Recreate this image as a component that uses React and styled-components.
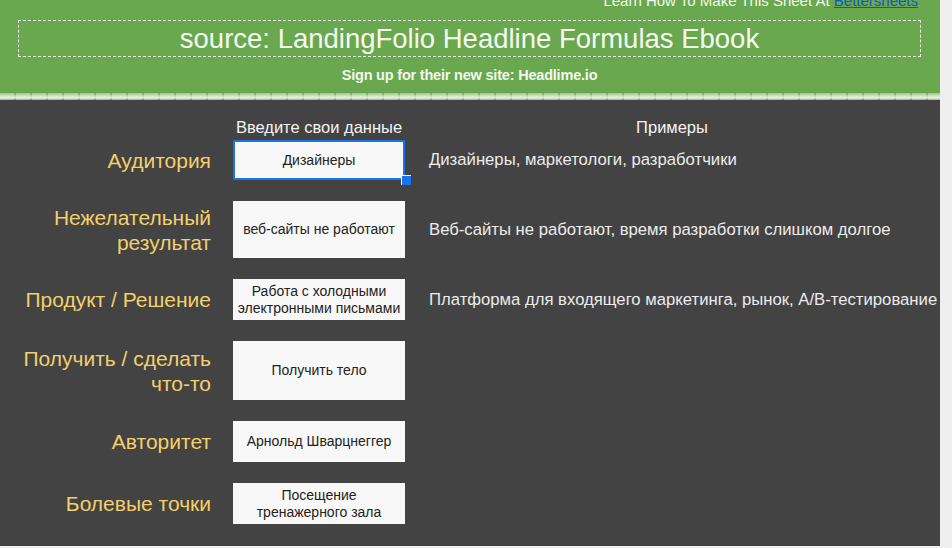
import React from 'react';
import styled, { createGlobalStyle } from 'styled-components';

const GlobalStyle = createGlobalStyle`
  html, body {
    margin: 0;
    padding: 0;
    background: #efefef;
    font-family: "Liberation Sans", Arial, sans-serif;
    overflow: hidden;
  }
`;

const Sheet = styled.div`
  width: 940px;
  height: 546px;
  background: #434343;
  display: flex;
  flex-direction: column;
  overflow: hidden;
`;

const Header = styled.div`
  background: #6aa84f;
  padding: 0 19px 0 18px;
  display: flex;
  flex-direction: column;
  height: 93px;
`;

const TopLink = styled.div`
  margin-top: -9px;
  height: 20px;
  text-align: right;
  padding-right: 3px;
  color: #f3f8ef;
  font-size: 15px;
  line-height: 20px;

  a {
    color: #1155cc;
  }
`;

const TitleBox = styled.div`
  margin-top: 9px;
  height: 35px;
  border: 1px dashed #e8f2e2;
  display: flex;
  align-items: center;
  justify-content: center;
  color: #f5faf1;
  font-size: 27.5px;
`;

const Sub = styled.div`
  margin-top: 10px;
  text-align: center;
  color: #f3f8ef;
  font-size: 14.5px;
  font-weight: bold;
  letter-spacing: -0.2px;
`;

const Edge = styled.div`
  height: 7px;
  background:
    repeating-linear-gradient(90deg, rgba(255, 255, 255, 0.35) 0 14px, rgba(255, 255, 255, 0) 14px 16px),
    linear-gradient(180deg, #6aa84f 0%, #b9d8a8 45%, #dfeed6 70%, #6f7a66 100%);
`;

const Table = styled.div`
  padding-top: 17px;
  display: flex;
  flex-direction: column;
`;

const Grid = styled.div`
  display: grid;
  grid-template-columns: 211px 172px 488px;
  column-gap: 22px;
  align-items: center;
  & > :nth-child(3n) {
    margin-left: 2px;
  }
`;

const Rows = styled(Grid)`
  row-gap: 21px;
  margin-top: 2px;
`;

const ColHead = styled.div`
  color: #f4f4f4;
  font-size: 16.5px;
  text-align: center;
  line-height: 21px;
  white-space: nowrap;
`;

const Label = styled.div`
  color: #f2d06b;
  font-size: 21px;
  line-height: 25px;
  text-align: right;
  white-space: nowrap;
`;

const Cell = styled.div`
  position: relative;
  box-sizing: border-box;
  height: ${p => p.$h}px;
  background: #f8f8f8;
  color: #222;
  font-size: 14px;
  line-height: 17px;
  display: flex;
  align-items: center;
  justify-content: center;
  text-align: center;
  padding: 0 4px;
  white-space: nowrap;
  border: ${p => (p.$active ? '2px solid #1a73e8' : 'none')};
`;

const Handle = styled.span`
  position: absolute;
  right: -8px;
  bottom: -7px;
  width: 9px;
  height: 9px;
  background: #1a73e8;
  border-left: 1px solid #fff;
  border-top: 1px solid #fff;
`;

const Example = styled.div`
  color: #ececec;
  font-size: 16.7px;
  white-space: nowrap;
`;

const rows = [
  { label: 'Аудитория', value: 'Дизайнеры', example: 'Дизайнеры, маркетологи, разработчики', h: 40, active: true },
  { label: ['Нежелательный', 'результат'], value: 'веб-сайты не работают', example: 'Веб-сайты не работают, время разработки слишком долгое', h: 57 },
  { label: 'Продукт / Решение', value: ['Работа с холодными', 'электронными письмами'], example: 'Платформа для входящего маркетинга, рынок, A/B-тестирование', h: 41 },
  { label: ['Получить / сделать', 'что-то'], value: 'Получить тело', example: '', h: 59 },
  { label: 'Авторитет', value: 'Арнольд Шварцнеггер', example: '', h: 41 },
  { label: 'Болевые точки', value: ['Посещение', 'тренажерного зала'], example: '', h: 41 },
];

function lines(text) {
  if (!Array.isArray(text)) return text;
  return text.map((t, i) => (
    <React.Fragment key={i}>
      {i > 0 && <br />}
      {t}
    </React.Fragment>
  ));
}

export default function App() {
  return (
    <>
      <GlobalStyle />
      <Sheet>
        <Header>
          <TopLink>
            Learn How To Make This Sheet At <a href="#">Bettersheets</a>
          </TopLink>
          <TitleBox>source: LandingFolio Headline Formulas Ebook</TitleBox>
          <Sub>Sign up for their new site: Headlime.io</Sub>
        </Header>
        <Edge />
        <Table>
          <Grid>
            <div />
            <ColHead>Введите свои данные</ColHead>
            <ColHead>Примеры</ColHead>
          </Grid>
          <Rows>
            {rows.map((r, i) => (
              <React.Fragment key={i}>
                <Label>{lines(r.label)}</Label>
                <Cell $h={r.h} $active={r.active}>
                  <span>{lines(r.value)}</span>
                  {r.active && <Handle />}
                </Cell>
                <Example>{r.example}</Example>
              </React.Fragment>
            ))}
          </Rows>
        </Table>
      </Sheet>
    </>
  );
}
